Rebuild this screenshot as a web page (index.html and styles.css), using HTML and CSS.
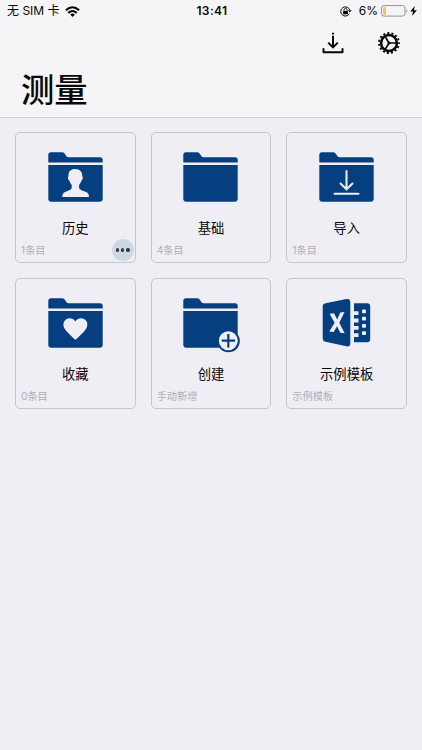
FILE: index.html
```html
<!DOCTYPE html>
<html lang="zh-CN">
<head>
<meta charset="utf-8">
<title>测量</title>
<link rel="stylesheet" href="styles.css">
</head>
<body>
<svg width="0" height="0" class="defs">
  <symbol id="folder" viewBox="0 0 55 50" overflow="visible">
    <path d="M.3 10.600V3Q.3.300 3 .300H14Q15.700.300 16.600 1.500L18.500 4.200Q19.200 5.200 20.500 5.200H52Q54.700 5.200 54.700 7.900V10.600Z"/>
    <path d="M.3 13H54.700V46.700Q54.700 49.700 51.700 49.700H3.300Q.3 49.700 .3 46.700Z"/>
  </symbol>
</svg>
<header class="header">
  <div class="status">
    <div class="carrier"><span>无 SIM 卡</span>
      <svg class="wifi" width="15" height="11" viewBox="0 0 15 11"><g fill="none" stroke="#050505" stroke-width="2.100"><path d="M.9 4.300Q7.500-1.800 14.100 4.300"/><path d="M3.300 6.900Q7.500 3.100 11.700 6.900"/></g><path fill="#050505" d="M5.200 8.500Q7.500 6.600 9.800 8.500L7.500 10.900Z"/></svg>
    </div>
    <time>13:41</time>
    <div class="power">
      <svg width="12" height="11" viewBox="0 0 12 11"><path d="M9.300 7.800A4.600 4.600 0 1 1 9.700 4" fill="none" stroke="#111" stroke-width="1"/><path d="M8 4.200h3.600L9.900 6.600Z"/><rect x="3.100" y="4.900" width="4.800" height="3.400" rx=".5"/><path d="M4 5V3.900a1.500 1.500 0 0 1 3 0V5" fill="none" stroke="#111" stroke-width=".9"/></svg>
      <span class="percent">6%</span>
      <svg width="27" height="12" viewBox="0 0 27 12"><rect x=".5" y=".6" width="23.500" height="10.500" rx="2.500" fill="none" stroke="#929294"/><path d="M5 2V9.700H3.200Q2 9.700 2 8.700V3Q2 2 3.200 2Z" fill="#f3c94b"/><path d="M25.200 4Q27.300 5.900 25.200 7.800Z" fill="#929294"/></svg>
      <svg class="bolt" width="7" height="10" viewBox="0 0 7 10"><path d="M4.800 0L.2 5.500H3L2.100 10 6.900 4.300H4Z"/></svg>
    </div>
  </div>
  <div class="actions">
    <svg width="22" height="22" viewBox="0 0 22 22"><g fill="none" stroke="#080808" stroke-width="2"><path d="M11 3.800V15M6.200 10.600L11 15.400L15.800 10.600"/><path d="M1.500 17V20.200H20.500V17" stroke-linejoin="round" stroke-linecap="round"/></g><path d="M10 .7h2v1.800h-2z"/></svg>
    <svg width="22" height="22" viewBox="0 0 22 22" fill="none" stroke="#080808"><circle cx="11" cy="11" r="9.900" stroke-width="2" stroke-dasharray="2 2.147" stroke-dashoffset="1"/><circle cx="11" cy="11" r="7.900" stroke-width="2.500"/><path d="M11 11H18M11 11L7.400 5M11 11L7.400 17" stroke-width="1.600"/><circle cx="11" cy="11" r="1.500" fill="#080808" stroke="none"/></svg>
  </div>
  <h1>测量</h1>
</header>
<main class="grid">
  <section class="card">
    <svg class="icon" viewBox="0 0 55 50"><use href="#folder"/><path class="cutout" d="M27.200 17C31.800 17 34.500 20 34.200 24.300Q35.600 25 34.400 27.300Q34.100 28.600 33.300 29.100Q32.600 31.500 31.100 33V36.100Q31.400 37.300 33.500 38.200L38 40Q41 41.200 41 44.900H14.300Q14.300 41.200 17 40L21.200 38.200Q23.500 37.300 23.700 36.100V33Q22.100 31.500 21.500 29.100Q20.600 28.600 20.300 27.300Q19.300 25 20.500 24.300Q20.100 20 22.700 18.200Q24.200 17 27.200 17Z"/></svg>
    <h2>历史</h2>
    <div class="note">1条目</div>
    <button class="more" aria-label="更多"><i></i><i></i><i></i></button>
  </section>
  <section class="card">
    <svg class="icon" viewBox="0 0 55 50"><use href="#folder"/></svg>
    <h2>基础</h2>
    <div class="note">4条目</div>
  </section>
  <section class="card">
    <svg class="icon" viewBox="0 0 55 50"><use href="#folder"/><g class="line"><path d="M27.500 19V36.500M21.500 31.500L27.500 37.300L33.500 31.500M15.500 41.700H39.500"/></g></svg>
    <h2>导入</h2>
    <div class="note">1条目</div>
  </section>
  <section class="card">
    <svg class="icon" viewBox="0 0 55 50"><use href="#folder"/><path class="cutout" d="M27.400 41.700Q24.500 39.500 18.500 33.200C15.200 29.700 14.600 25.800 16.500 23C19.300 19 24.900 19.700 27.400 23.400C29.900 19.700 35.500 19 38.300 23C40.200 25.800 39.600 29.700 36.300 33.200Q30.300 39.500 27.400 41.700Z"/></svg>
    <h2>收藏</h2>
    <div class="note">0条目</div>
  </section>
  <section class="card">
    <svg class="icon" viewBox="0 0 55 50"><use href="#folder"/><circle cx="45.500" cy="43" r="11.300" fill="#053f80"/><circle class="cutout" cx="45.300" cy="42.700" r="9.500"/><path d="M38.700 42.700H52M45.300 36V49.400" stroke="#053f80" stroke-width="2.200"/></svg>
    <h2>创建</h2>
    <div class="note">手动新增</div>
  </section>
  <section class="card">
    <svg class="icon" viewBox="0 0 55 50"><path d="M6.500 5.300L27.500 1.100Q31.300.4 31.300 4V45.500Q31.300 49 27.500 48.300L6.500 43.700Q3.700 43 3.700 40.500V8.400Q3.700 5.800 6.500 5.300Z"/><path d="M35 5.200H48.200Q51.200 5.200 51.200 8.200V41.300Q51.200 44.300 48.200 44.300H35V39H39.500V35.200H35V31.700H39.500V27.900H35V24.400H39.500V20.600H35V17.100H39.500V13.300H35Z"/><g class="cutout"><rect x="43" y="11.500" width="4" height="3.700" rx="1"/><rect x="43" y="18.700" width="4" height="3.700" rx="1"/><rect x="43" y="26" width="4" height="3.700" rx="1"/><rect x="43" y="33.300" width="4" height="3.700" rx="1"/><path d="M10.600 15.700L15 15.200L18.200 21.500L21.300 14.600L25.500 14.100L20.300 24.800L25.700 35.200L21.300 34.700L18 28.300L14.700 34.100L10.300 33.600L15.600 24.700Z"/></g></svg>
    <h2>示例模板</h2>
    <div class="note">示例模板</div>
  </section>
</main>
</body>
</html>
```
FILE: styles.css
```css
* { box-sizing: border-box; }
body {
  margin: 0;
  min-height: 750px;
  background: #efeef4;
  color: #080808;
  font-family: Inter, "Noto Sans CJK SC", sans-serif;
}
svg { display: block; flex: none; }
.defs { position: absolute; }
.header {
  height: 118px;
  background: #f5f5f7;
  border-bottom: 1px solid #d2d2d7;
}
.status {
  display: grid;
  grid-template-columns: 1fr auto 1fr;
  align-items: center;
  height: 22px;
  padding: 0 5px 0 7px;
  font-size: 12px;
  line-height: 22px;
}
.carrier { display: flex; align-items: center; gap: 5px; white-space: nowrap; }
.status time { font-weight: 600; font-size: 12px; letter-spacing: .4px; }
.power { display: flex; align-items: center; justify-content: flex-end; }
.percent { margin: 0 3px 0 7px; }
.bolt { margin-left: 2px; }
.actions {
  display: flex;
  justify-content: flex-end;
  gap: 34px;
  padding: 10px 22.500px 0 0;
}
h1 {
  margin: 12px 0 0 21px;
  font-size: 33.300px;
  line-height: 48px;
  font-weight: 500;
}
.grid {
  display: grid;
  grid-template-columns: repeat(3, 1fr);
  grid-auto-rows: 131px;
  gap: 15px;
  padding: 14px 15px;
}
.card {
  position: relative;
  display: flex;
  flex-direction: column;
  align-items: center;
  border: 1px solid #c5c5ca;
  border-radius: 5px;
  padding-top: 19px;
}
.icon { width: 55px; height: 50px; overflow: visible; fill: #053f80; }
.cutout { fill: #efeef4; }
.line { fill: none; stroke: #efeef4; stroke-width: 2; stroke-linecap: round; }
h2 {
  margin: 16px 0 0;
  font-size: 13.300px;
  line-height: 20px;
  font-weight: 400;
}
.note {
  align-self: flex-start;
  margin: 5px 0 0 5px;
  font-size: 10.200px;
  line-height: 15px;
  color: #afafb4;
}
.more {
  position: absolute;
  right: 1px;
  bottom: 1px;
  display: flex;
  align-items: center;
  justify-content: center;
  gap: 2px;
  width: 22px;
  height: 22px;
  padding: 0;
  border: 0;
  border-radius: 50%;
  background: #cfd8de;
}
.more i { width: 3.300px; height: 3.300px; border-radius: 50%; background: #243d55; }
```
